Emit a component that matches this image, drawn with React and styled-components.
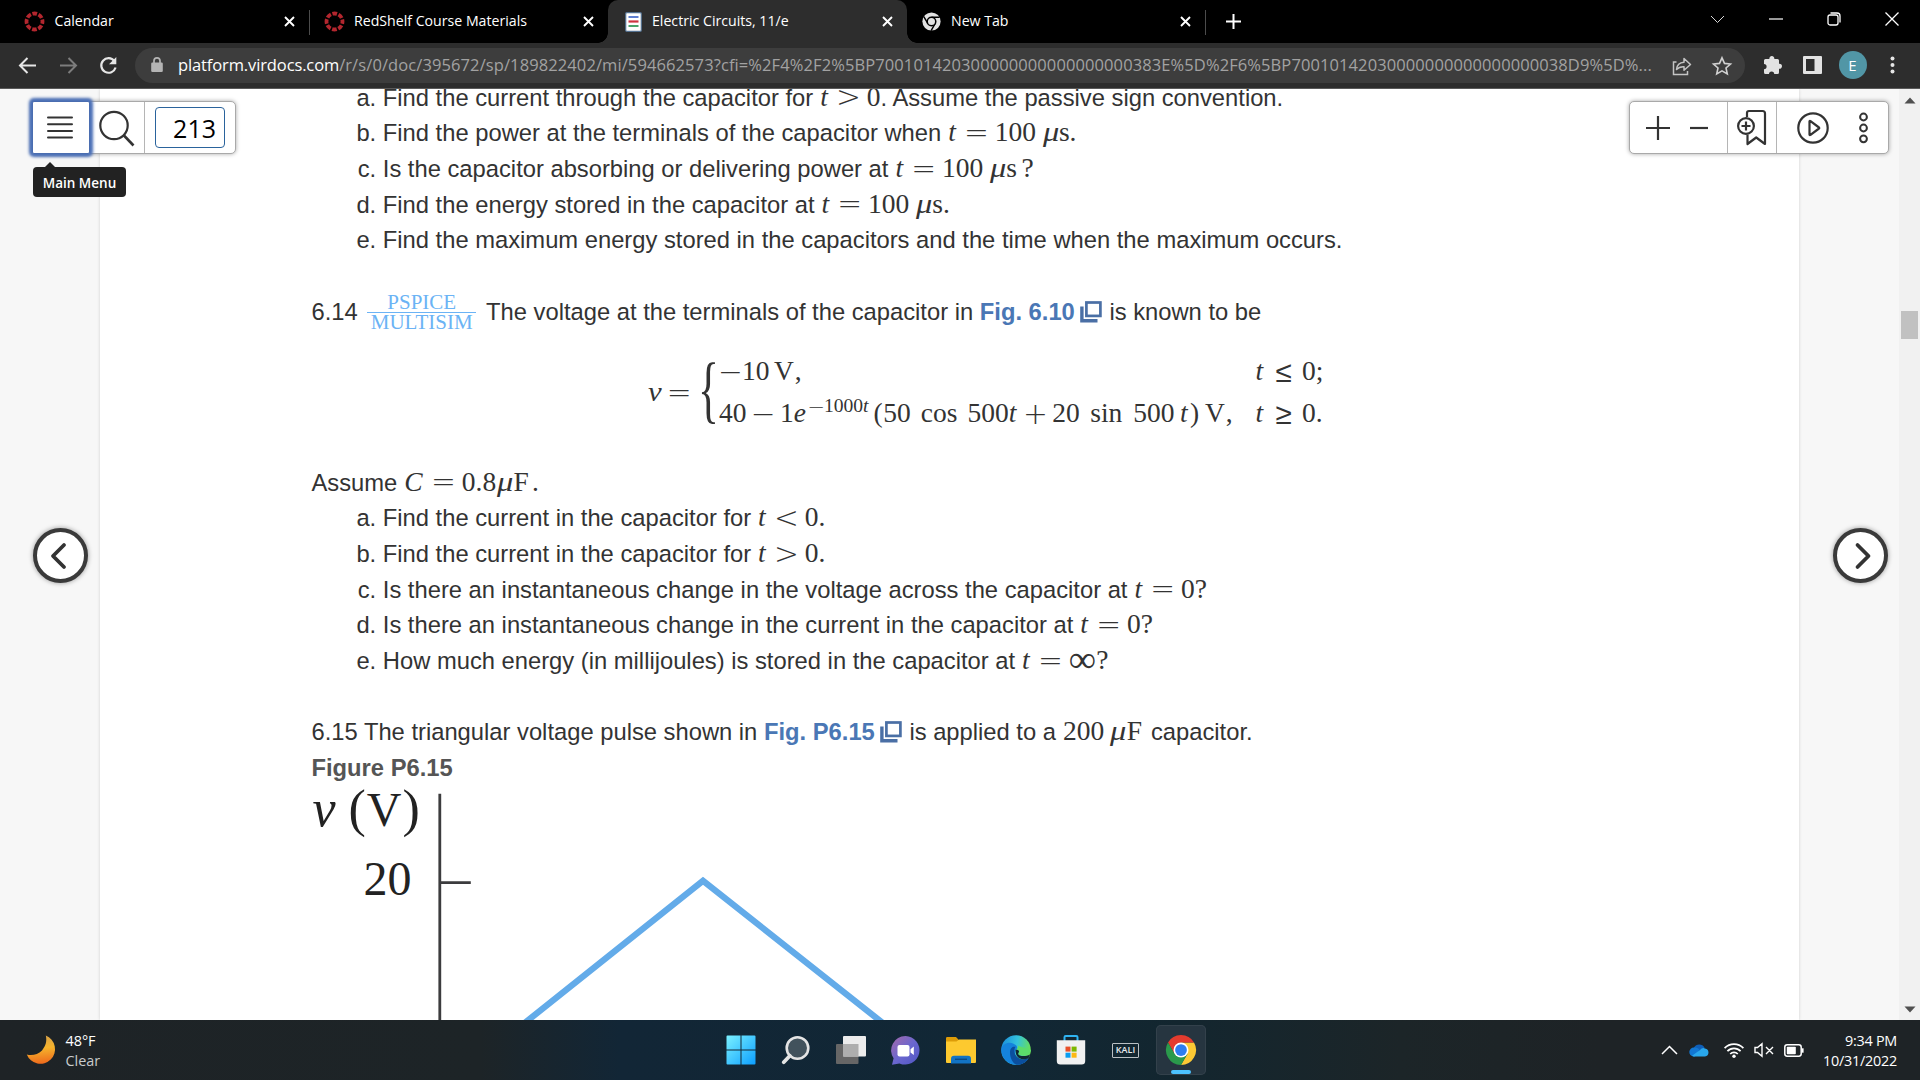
import React from "react";
import styled, { createGlobalStyle } from "styled-components";

const UI = `"Open Sans", "Noto Sans", sans-serif`;
const SERIF = `"Liberation Serif", "Times New Roman", serif`;

const GlobalStyle = createGlobalStyle`
  * { box-sizing: border-box; }
  html, body { margin: 0; padding: 0; width: 1920px; height: 1080px; overflow: hidden; }
  svg { display: block; flex: none; overflow: visible; }
`;

const Screen = styled.div`
  width: 1920px;
  height: 1080px;
  display: flex;
  flex-direction: column;
  overflow: hidden;
  background: #fff;
  font-family: ${UI};
`;

/* ---------- browser chrome ---------- */
const TabStrip = styled.header`
  height: 43px;
  flex: none;
  display: flex;
  background: #000;
`;
const Tab = styled.div`
  width: ${(p) => p.$w}px;
  height: 43px;
  flex: none;
  display: flex;
  align-items: center;
  position: relative;
  padding-left: ${(p) => p.$pl}px;
  padding-right: 14px;
  color: #fff;
  background: ${(p) => (p.$active ? "#2d2d2d" : "transparent")};
  border-radius: 10px 10px 0 0;
  ${(p) =>
    p.$active &&
    `&::before, &::after { content: ""; position: absolute; bottom: 0; width: 10px; height: 10px; }
     &::before { left: -10px; background: radial-gradient(circle at 0 0, #000 9.5px, #2d2d2d 10px); }
     &::after { right: -10px; background: radial-gradient(circle at 100% 0, #000 9.5px, #2d2d2d 10px); }`}
`;
const TabTitle = styled.span`
  flex: 1;
  margin: -2px 0 0 ${(p) => p.$ml || 9.5}px;
  font-size: 14.15px;
  line-height: 20px;
  white-space: nowrap;
`;
const Divider = styled.span`
  width: 1px;
  height: 25px;
  margin-top: 10px;
  flex: none;
  background: #4c4c4c;
`;
const NewTab = styled.span`
  display: flex;
  align-items: center;
  padding-left: 20px;
`;
const WindowControls = styled.div`
  margin-left: auto;
  height: 37px;
  padding-right: 21px;
  display: flex;
  align-items: center;
  gap: 44px;
`;
const NavBar = styled.div`
  height: 46px;
  flex: none;
  display: flex;
  align-items: center;
  background: #2d2d2d;
  border-bottom: 1px solid #5a5a5a;
  padding: 0 0 1px 17px;
`;
const NavButtons = styled.div`
  display: flex;
  gap: 19.5px;
  width: 118px;
`;
const Omnibox = styled.div`
  width: 1610px;
  height: 35px;
  flex: none;
  display: flex;
  align-items: center;
  padding: 0 13px 0 15px;
  border-radius: 18px;
  background: #3d3d3d;
`;
const Url = styled.span`
  width: 1490px;
  flex: none;
  margin-left: 14px;
  color: #a2a2a2;
  font-size: 16.5px;
  line-height: 24px;
  white-space: nowrap;
  letter-spacing: 0.1px;
`;
const Host = styled.span`
  color: #fff;
  letter-spacing: -0.12px;
`;
const UrlActions = styled.div`
  display: flex;
  gap: 20px;
  margin: 2px 0 0 auto;
`;
const Extensions = styled.div`
  display: flex;
  align-items: center;
  padding-left: 17.5px;
  gap: 20px;
`;
const Avatar = styled.span`
  width: 28px;
  height: 28px;
  margin: 0 3px 0 -3px;
  border-radius: 50%;
  display: grid;
  place-items: center;
  background: #5196a6;
  color: #fff;
  font-size: 15px;
`;

/* ---------- reader ---------- */
const Reader = styled.main`
  height: 931px;
  flex: none;
  display: flex;
  position: relative;
  overflow: hidden;
  background: #f7f7f7;
`;
const Page = styled.article`
  width: 1699px;
  margin-left: 100px;
  height: 931px;
  overflow: hidden;
  padding-left: 211.5px;
  background: #fff;
  box-shadow: 0 0 3px rgba(0, 0, 0, 0.16);
  font-family: "Liberation Sans", Arial, sans-serif;
  font-size: 23.75px;
  color: #333;
`;
const Shift = styled.div`
  margin-top: -9.2px;
`;
const Line = styled.p`
  margin: 0;
  height: 35.65px;
  line-height: 35.65px;
  white-space: pre;
  ${(p) => p.$gap && `margin-top: ${p.$gap}px;`}
`;
const List = styled.ol`
  list-style: none;
  margin: 0;
  padding: 0;
`;
const Item = styled.li`
  height: 35.65px;
  line-height: 35.65px;
  white-space: pre;
  display: flex;
`;
const Marker = styled.span`
  width: 71.3px;
  padding-right: 6.6px;
  flex: none;
  text-align: right;
`;
const FigLink = styled.b`
  color: #4a77b5;
`;
const Caption = styled.b`
  color: #555;
`;
const InlineIcon = styled.span`
  display: inline-block;
  vertical-align: -3px;
  margin: 0 0.5px 0 5.5px;
`;

/* ---------- math ---------- */
const Formula = styled.span`
  font-family: ${SERIF};
  font-size: 27.5px;
  line-height: 0;
  display: inline-block;
  white-space: nowrap;
  margin-left: 0.4px;
`;
const Glyph = styled.span`
  display: inline-block;
  width: ${(p) => p.$w}em;
  font-style: ${(p) => (p.$it ? "italic" : "normal")};
  margin-left: ${(p) => p.$l || 0}em;
  ${(p) => p.$sx && `transform: scaleX(${p.$sx}); transform-origin: 0 50%;`}
`;
const InfinityGlyph = styled.span`
  display: inline-block;
  position: relative;
  top: 3px;
  width: 0.72em;
  font-size: 1.39em;
`;
const RelBox = styled.span`
  display: inline-flex;
  justify-content: center;
  width: 0.778em;
  margin: 0 ${(p) => (p.$m === undefined ? 0.278 : p.$m)}em;
`;
const RelSign = styled.span`
  position: relative;
  top: 0.055em;
  font-family: "DejaVu Sans", sans-serif;
  font-weight: 200;
  font-size: 1.08em;
`;
const Rel = ({ children, m }) => (
  <RelBox $m={m}>
    <RelSign>{children}</RelSign>
  </RelBox>
);
const T = () => <Glyph $w={0.361} $it>t</Glyph>;
const Micro = () => <Glyph $w={0.6} $sx={1.18} $it>μ</Glyph>;

const Fraction = styled.span`
  display: inline-flex;
  flex-direction: column;
  align-items: center;
  vertical-align: 10.5px;
  width: 109px;
  margin: 0 9.8px 0 9.5px;
  font-family: ${SERIF};
  font-size: 21px;
  line-height: 19px;
  color: #6bb3f5;
`;
const Numerator = styled.span`
  width: 109px;
  text-align: center;
  border-bottom: 1.5px solid #6bb3f5;
`;
const Equation = styled.div`
  height: 135.7px;
  display: flex;
  padding: 20.3px 0 0 336px;
  font-family: ${SERIF};
  font-size: 27.5px;
`;
const Lhs = styled.span`
  width: 50.5px;
  line-height: 84px;
  white-space: nowrap;
`;
const Brace = styled.span`
  width: 21px;
  display: flex;
  justify-content: center;
  font-size: 75px;
  line-height: 80px;
  transform: scaleX(0.58);
`;
const Cases = styled.div`
  display: grid;
  grid-template-columns: 536.5px auto;
  grid-template-rows: 42px 42px;
  line-height: 42px;
  white-space: nowrap;
`;
const Sup = styled.span`
  font-size: 19.6px;
  line-height: 0;
  position: relative;
  top: -10px;
  margin-left: 2px;
`;

/* ---------- floating controls ---------- */
const FloatBar = styled.div`
  position: absolute;
  top: 12px;
  ${(p) => (p.$left ? `left: 32px; width: 204px;` : `left: 1629px; width: 260px;`)}
  height: 53px;
  display: flex;
  background: #fff;
  border: 1px solid #a9a9a9;
  border-radius: 5px;
  box-shadow: 0 0 4px rgba(0, 0, 0, 0.35);
`;
const BarCell = styled.div`
  width: ${(p) => p.$w}px;
  flex: none;
  display: flex;
  align-items: center;
  justify-content: center;
  gap: ${(p) => p.$gap || 0}px;
  padding-right: ${(p) => p.$pr || 0}px;
  border-right: ${(p) => (p.$rule ? "1px solid #b5b5b5" : "none")};
`;
const MenuButton = styled.button`
  width: 58px;
  height: 53px;
  margin: -1px 0 0 -1px;
  padding: 0 2px 0 0;
  flex: none;
  display: grid;
  place-items: center;
  background: #fff;
  border: 1px solid #4a6db0;
  border-radius: 2px;
  box-shadow: 0 0 3px 3px #4a6fb6;
`;
const PageInput = styled.div`
  width: 70px;
  height: 41px;
  border: 1.5px solid #2a639c;
  border-radius: 4px;
  padding: 1px 8px 0 0;
  text-align: right;
  color: #000;
  font: 25px/39px ${UI};
`;
const Tooltip = styled.div`
  position: absolute;
  left: 33px;
  top: 78px;
  width: 93px;
  height: 30px;
  border-radius: 4px;
  background: #222;
  color: #fff;
  font: 600 13.5px/32px ${UI};
  text-align: center;
  white-space: nowrap;
  &::before {
    content: "";
    position: absolute;
    left: 12px;
    top: -5px;
    border: 5px solid transparent;
    border-top: 0;
    border-bottom-color: #222;
  }
`;
const PageTurn = styled.button`
  position: absolute;
  top: 439px;
  left: ${(p) => p.$x}px;
  width: 55px;
  height: 55px;
  padding: 0;
  border-radius: 50%;
  border: 4px solid #3a3a3a;
  background: #fff;
  display: grid;
  place-items: center;
  box-shadow: 0 0 5px rgba(0, 0, 0, 0.4);
`;
const Scrollbar = styled.div`
  width: 21px;
  margin-left: auto;
  display: flex;
  flex-direction: column;
  align-items: center;
  justify-content: space-between;
  padding: 8px 0 7px;
  background: #f1f1f1;
`;
const Thumb = styled.span`
  width: 17px;
  height: 28px;
  margin-bottom: 460px;
  background: #c1c1c1;
`;

/* ---------- taskbar ---------- */
const Taskbar = styled.footer`
  height: 60px;
  flex: none;
  display: flex;
  align-items: center;
  color: #fff;
  background: linear-gradient(90deg, #1e2326 0, #1d2427 480px, #122636 620px, #112735 1000px, #13262f 1180px, #1c2528 1400px, #1e2326 1600px);
`;
const Weather = styled.div`
  width: 713px;
  padding-left: 26px;
  display: flex;
  align-items: center;
  gap: 9.5px;
`;
const TwoLines = styled.div`
  padding-top: 1px;
  font-size: 14.4px;
  line-height: 20px;
  text-align: ${(p) => p.$align || "left"};
  letter-spacing: ${(p) => p.$track || 0}px;
`;
const Dim = styled.div`
  color: #c9cbcc;
`;
const Apps = styled.div`
  display: flex;
`;
const AppSlot = styled.div`
  width: 50px;
  height: 50px;
  margin: 0 2.5px;
  border-radius: 5px;
  position: relative;
  display: grid;
  place-items: center;
  ${(p) => p.$active && `background: #263540; box-shadow: inset 0 0 0 1px #33414b;
    &::after { content: ""; position: absolute; bottom: 1px; left: 15px; width: 20px; height: 4px; border-radius: 2px; background: #4cc2ff; }`}
`;
const Kali = styled.span`
  width: 27px;
  height: 15px;
  border: 1.5px solid #b9c0c4;
  border-radius: 1px;
  color: #e8ebec;
  font: 600 9px/12px ${UI};
  text-align: center;
`;
const Tray = styled.div`
  margin-left: auto;
  padding-right: 23px;
  display: flex;
  align-items: center;
`;
const TrayIcon = styled.span`
  margin-right: ${(p) => p.$r}px;
`;

/* ---------- icons ---------- */
const Stroke = ({ w, h = w, d, c = "#fff", s = 1.6, children, cap = "butt", join = "miter" }) => (
  <svg width={w} height={h} viewBox={`0 0 ${w} ${h}`} fill="none" stroke={c} strokeWidth={s} strokeLinecap={cap} strokeLinejoin={join}>
    {d && <path d={d} />}
    {children}
  </svg>
);
const Close = () => <Stroke w={11} s={1.9} d="M1 1 10 10M10 1 1 10" />;
const CanvasLogo = () => (
  <Stroke w={21} c="#b3262e" s={3.8}>
    <circle cx="10.5" cy="10.5" r="8" strokeDasharray="4.7 1.58" strokeDashoffset="2.35" />
  </Stroke>
);
const DocIcon = () => (
  <svg width="17" height="20" viewBox="0 0 17 20">
    <rect x=".7" y=".7" width="15.6" height="18.6" rx="1" fill="#fff" stroke="#53708f" strokeWidth="1.2" />
    <path d="M3.5 5h10" stroke="#5f7fd0" strokeWidth="2" />
    <path d="M3.5 9.5h10" stroke="#cf3341" strokeWidth="2.2" />
    <path d="M3.5 14h10" stroke="#4ba36b" strokeWidth="2" />
  </svg>
);
const ChromeMono = () => (
  <svg width="19" height="19" viewBox="0 0 20 20">
    <circle cx="10" cy="10" r="9.6" fill="#e3e3e3" />
    <path d="M10 5.6h8.6M6.2 12.2 1.9 4.8M13.8 12.2 9.6 19.6" stroke="#000" strokeWidth="1.5" />
    <circle cx="10" cy="10" r="4.5" fill="#e3e3e3" stroke="#000" strokeWidth="1.6" />
    <circle cx="10" cy="10" r="2.2" fill="#e3e3e3" />
  </svg>
);
const ChromeColor = () => (
  <svg width="30" height="30" viewBox="0 0 48 48">
    <path d="M24 12h20.800A24 24 0 0 1 24 48l10.400-18Z" fill="#fcc934" />
    <path d="M3.200 12A24 24 0 0 1 44.800 12H24L13.600 30Z" fill="#e33b2e" />
    <path d="M3.200 12 13.600 30 24 36 34.400 30 24 48A24 24 0 0 1 3.200 12Z" fill="#2a9a4b" />
    <circle cx="24" cy="24" r="12" fill="#fff" />
    <circle cx="24" cy="24" r="9.400" fill="#2d7df0" />
  </svg>
);
const PopOut = () => (
  <svg width="22" height="22" viewBox="0 0 22 22" fill="none" stroke="#4a6fa5">
    <rect x="6.400" y="1.500" width="14" height="13.400" strokeWidth="2.700" />
    <path d="M1.900 5.500v14.200h15.600" strokeWidth="3.400" />
  </svg>
);
const Moon = () => (
  <svg width="30" height="30" viewBox="0 0 30 30">
    <defs>
      <linearGradient id="moon" x1="0.4" y1="0" x2="0.5" y2="1">
        <stop offset="0" stopColor="#d8a24a" />
        <stop offset=".45" stopColor="#f5b32c" />
        <stop offset="1" stopColor="#ee6a1c" />
      </linearGradient>
    </defs>
    <path d="M19.8 0.6A14.6 14.6 0 1 1 0.8 19.4C6 20.8 12 19.4 16 15.4 20 11 21 5.6 19.8 0.6Z" fill="url(#moon)" />
  </svg>
);
const WindowsLogo = () => (
  <svg width="30" height="30" viewBox="0 0 30 30">
    <defs>
      <linearGradient id="win" x1="0" y1="0" x2="30" y2="30" gradientUnits="userSpaceOnUse">
        <stop offset="0" stopColor="#7df3ff" />
        <stop offset="1" stopColor="#0a9dff" />
      </linearGradient>
    </defs>
    <path d="M1.4.5h13.1v14H.5v-13a1 1 0 0 1 .9-1ZM15.5.5h13a1 1 0 0 1 1 1v13h-14ZM.5 15.5h14v14h-13a1 1 0 0 1-1-1ZM15.5 15.5h14v13a1 1 0 0 1-1 1h-13Z" fill="url(#win)" />
  </svg>
);
const TaskSearch = () => (
  <svg width="28" height="30" viewBox="0 0 28 30" fill="none" stroke="#e4e4e4">
    <circle cx="15.500" cy="13" r="10.800" strokeWidth="2.600" fill="#42525c" />
    <path d="M7.900 20.800 1.700 27.200" strokeWidth="3.800" strokeLinecap="round" />
  </svg>
);
const TaskView = () => (
  <svg width="30" height="28" viewBox="0 0 30 28">
    <rect x="0" y="8" width="22.5" height="20" rx="1" fill="#666" />
    <rect x="7" y="0" width="23" height="20.5" rx="1" fill="#ececec" />
    <rect x="7" y="8" width="15.5" height="12.5" fill="#aeaeae" />
  </svg>
);
const Chat = () => (
  <svg width="29" height="29" viewBox="0 0 29 29">
    <defs>
      <linearGradient id="chat" x1="0" y1="0" x2="1" y2="1">
        <stop offset="0" stopColor="#a568a8" />
        <stop offset=".5" stopColor="#6b67cf" />
        <stop offset="1" stopColor="#4f55c4" />
      </linearGradient>
    </defs>
    <path d="M14.5 0a14.3 14.3 0 1 1-6 27.4L1 28.8l1.6-6.600A14.3 14.3 0 0 1 14.5 0Z" fill="url(#chat)" />
    <rect x="6.5" y="9" width="12" height="11.5" rx="2" fill="#fff" />
    <path d="M19.5 13.2 22.8 10.6v8.4l-3.3-2.600Z" fill="#fff" />
  </svg>
);
const Folder = () => (
  <svg width="30" height="28" viewBox="0 0 30 28">
    <path d="M0 2.2Q0 1 1.2 1H10l3.4 3.4H28.600Q30 4.4 30 6v6H0Z" fill="#dd9c08" />
    <path d="M0 5.5h10.5l2.6-2H30V26q0 1-1 1H1q-1 0-1-1Z" fill="#fdc92f" />
    <path d="M5 27.4v-4.600q0-3 3-3h14q3 0 3 3v4.600Z" fill="#1273c4" />
    <path d="M9 23.3h12" stroke="#0a4a86" strokeWidth="1.4" />
  </svg>
);
const Edge = () => (
  <svg width="30" height="30" viewBox="0 0 30 30">
    <defs>
      <linearGradient id="edgeTop" x1="0" y1=".3" x2="1" y2=".5">
        <stop offset="0" stopColor="#1b8fdc" />
        <stop offset=".5" stopColor="#33c2dd" />
        <stop offset="1" stopColor="#6be04f" />
      </linearGradient>
    </defs>
    <circle cx="15" cy="15" r="14.8" fill="url(#edgeTop)" />
    <path d="M.3 14.5C1 8.600 7.500 6.500 12 8.400 16 10 17 12 15.500 14.500 12 18 14 24.500 21 25.500 24 26 26.500 24.500 27.600 23.300 24 28.500 19.500 30 15 29.800 7 29.500.3 23 .3 14.500Z" fill="#1583dc" />
    <path d="M9 17.500C9 13 11.500 11.300 14.500 11.800 11.500 16.500 14.500 23.500 21.500 24.300 25 24.600 27.500 22.500 28 22.200 25.500 27.500 20.500 30 15.500 29.800 11.500 28 9 23 9 17.500Z" fill="#0b4f9e" />
    <path d="M15.500 14.500C17 12.500 17.500 11.500 16.500 10.500L30 15C29.500 19 26 20.500 22.500 20.500 19 20.500 16.500 19.500 17.300 18.200 18.500 17 18 15 15.500 14.500Z" fill="#5bdc6a" />
    <path d="M14.600 14.800C17.500 14 19 16.500 17.300 18.200 16.500 19.700 19.500 21.300 24 21 26.500 20.800 28.500 20 29 19.200 28.800 21 28 22.300 27.300 23.200 22.500 26 14 24 14.600 14.800Z" fill="#112735" />
  </svg>
);
const Store = () => (
  <svg width="30" height="30" viewBox="0 0 30 30">
    <path d="M8.500 6V2.200Q8.500 1 9.700 1h10.600q1.200 0 1.200 1.200V6" fill="none" stroke="#2fb4f2" strokeWidth="2" />
    <path d="M.8 5.200h28.400V26q0 3.600-3.600 3.600H4.400Q.8 29.600.8 26Z" fill="#f1f1f1" />
    <rect x="9.500" y="11.600" width="5" height="5" fill="#e8502a" />
    <rect x="15.600" y="11.600" width="5" height="5" fill="#7db700" />
    <rect x="9.500" y="17.700" width="5" height="5" fill="#0a9df0" />
    <rect x="15.600" y="17.700" width="5" height="5" fill="#fcb813" />
  </svg>
);

const Micros = ({ n }) => (
  <>
    {n}
    <Glyph $w={0.235} />
    <Micro />
    <Glyph $w={0.385}>s</Glyph>
  </>
);

const ZEROS = "0".repeat(17);
const URL_PATH = `/r/s/0/doc/395672/sp/189822402/mi/594662573?cfi=%2F4%2F2%5BP7001014203${ZEROS}383E%5D%2F6%5BP7001014203${ZEROS}38D9%5D%...`;

export default function App() {
  return (
    <Screen>
      <GlobalStyle />
      <TabStrip>
        <Tab $w={309} $pl={24}>
          <CanvasLogo />
          <TabTitle>Calendar</TabTitle>
          <Close />
        </Tab>
        <Divider />
        <Tab $w={298} $pl={13.5}>
          <CanvasLogo />
          <TabTitle>RedShelf Course Materials</TabTitle>
          <Close />
        </Tab>
        <Tab $w={299} $pl={17} $active>
          <DocIcon />
          <TabTitle $ml={10}>Electric Circuits, 11/e</TabTitle>
          <Close />
        </Tab>
        <Tab $w={298} $pl={14.5}>
          <ChromeMono />
          <TabTitle $ml={10.5}>New Tab</TabTitle>
          <Close />
        </Tab>
        <Divider />
        <NewTab>
          <Stroke w={15} s={2} d="M7.500 0v15M0 7.500h15" />
        </NewTab>
        <WindowControls>
          <Stroke w={14} s={1} c="#d8d8d8" d="M0 4l6.500 6.500L13 4" />
          <Stroke w={14} s={1.200} d="M0 7h14" />
          <Stroke w={14} s={1.300}>
            <rect x="1" y="3" width="10" height="10" rx="2" />
            <path d="M3.500 1H10q3 0 3 3v6.500" />
          </Stroke>
          <Stroke w={14} s={1.300} d="M.5.5l13 13M13.500.5l-13 13" />
        </WindowControls>
      </TabStrip>
      <NavBar>
        <NavButtons>
          <Stroke w={21} s={2} c="#e6e6e6" d="M19 10.500H3M10.500 3 3 10.500l7.500 7.500" />
          <Stroke w={21} s={2} c="#7d7d7d" d="M2 10.500h16M10.500 3l7.500 7.500-7.500 7.500" />
          <Stroke w={21} s={2.200} c="#e6e6e6">
            <path d="M16.400 6A7.300 7.300 0 1 0 17.600 12.500" />
            <path d="M18.300 2v7.300h-7.300Z" fill="#e6e6e6" stroke="none" />
          </Stroke>
        </NavButtons>
        <Omnibox>
          <svg width="14" height="16" viewBox="0 0 14 16">
            <rect x="1.200" y="5.600" width="11.600" height="9.400" rx="1.200" fill="#b4b4b4" />
            <path d="M4 6V3.800a3 3 0 0 1 6 0V6" fill="none" stroke="#b4b4b4" strokeWidth="1.700" />
          </svg>
          <Url>
            <Host>platform.virdocs.com</Host>
            {URL_PATH}
          </Url>
          <UrlActions>
            <Stroke w={20} s={1.500} c="#c4c4c4">
              <path d="M4.500 6H1.500v12.500h14V15" />
              <path d="M4.500 13.500C5 8.500 8 6.500 12 6.300V2.500l6.500 6-6.500 5.800v-3.600C9 10.500 6.500 11.300 4.500 13.500Z" strokeLinejoin="round" />
            </Stroke>
            <Stroke w={20} s={1.600} c="#d0d0d0" d="M10 1.800l2.500 5.600 6 .6-4.500 4 1.300 6L10 14.900 4.700 18 6 12 1.500 8l6-.6Z" />
          </UrlActions>
        </Omnibox>
        <Extensions>
          <svg width="20" height="20" viewBox="0 0 20 20" fill="#e2e2e2">
            <path d="M1 5.500q0-1.500 1.500-1.500H6.400a2.500 2.500 0 1 1 4.900 0h3.200q1.500 0 1.500 1.500v3.300a2.500 2.500 0 1 1 0 4.900v3.800q0 1.500-1.500 1.500h-3.300a2.600 2.600 0 0 0-5.200 0H2.500Q1 19 1 17.500v-3.300a2.600 2.600 0 0 0 0-5.200Z" />
          </svg>
          <svg width="19" height="18" viewBox="0 0 19 18">
            <rect width="19" height="18" rx="1" fill="#e2e2e2" />
            <rect x="3" y="3" width="8.500" height="12" fill="#2d2d2d" />
          </svg>
          <Avatar>E</Avatar>
          <svg width="5" height="18" viewBox="0 0 5 18" fill="#e6e6e6">
            <circle cx="2.500" cy="2.500" r="2" /><circle cx="2.500" cy="9" r="2" /><circle cx="2.500" cy="15.500" r="2" />
          </svg>
        </Extensions>
      </NavBar>

      <Reader>
        <Page>
          <Shift>
            <List>
              <Item>
                <Marker>a.</Marker>
                <span>Find the current through the capacitor for <Formula><T /><Rel>&gt;</Rel>0</Formula>. Assume the passive sign convention.</span>
              </Item>
              <Item>
                <Marker>b.</Marker>
                <span>Find the power at the terminals of the capacitor when <Formula><T /><Rel>=</Rel><Micros n="100" />.</Formula></span>
              </Item>
              <Item>
                <Marker>c.</Marker>
                <span>Is the capacitor absorbing or delivering power at <Formula><T /><Rel>=</Rel><Micros n="100" /><Glyph $w={0.472} $l={0.167}>?</Glyph></Formula></span>
              </Item>
              <Item>
                <Marker>d.</Marker>
                <span>Find the energy stored in the capacitor at <Formula><T /><Rel>=</Rel><Micros n="100" />.</Formula></span>
              </Item>
              <Item>
                <Marker>e.</Marker>
                <span>Find the maximum energy stored in the capacitors and the time when the maximum occurs.</span>
              </Item>
            </List>
            <Line $gap={35.4}>
              <span>6.14</span>
              <Fraction>
                <Numerator>PSPICE</Numerator>
                <span>MULTISIM</span>
              </Fraction>
              <span>The voltage at the terminals of the capacitor in </span>
              <FigLink>Fig. 6.10</FigLink>
              <InlineIcon><PopOut /></InlineIcon>
              <span> is known to be</span>
            </Line>
            <Equation>
              <Lhs>
                <Glyph $w={0.485} $sx={1.12} $it>v</Glyph>
                <Rel>=</Rel>
              </Lhs>
              <Brace>{"{"}</Brace>
              <Cases>
                <span><Rel m={0.03}>−</Rel>10<Glyph $w={0.75} $l={0.167}>V</Glyph>,</span>
                <span><T /><Rel>≤</Rel>0;</span>
                <span>
                  40<Rel m={0.222}>−</Rel>1<Glyph $w={0.466} $it>e</Glyph>
                  <Sup><Rel m={0}>−</Rel>1000<T /></Sup>
                  <Glyph $w={0.36} $l={0.12}>(</Glyph>50<Glyph $w={1.333} $l={0.36}>cos</Glyph><Glyph $w={0.37} />500<T />
                  <Rel m={0.222}>+</Rel>20<Glyph $w={1.167} $l={0.38}>sin</Glyph><Glyph $w={0.4} />500
                  <Glyph $w={0.361} $l={0.2} $it>t</Glyph>
                  <Glyph $w={0.389}>)</Glyph><Glyph $w={0.75} $l={0.16}>V</Glyph>,
                </span>
                <span><T /><Rel>≥</Rel>0.</span>
              </Cases>
            </Equation>
            <Line>
              Assume <Formula><Glyph $w={0.76} $it>C</Glyph><Rel>=</Rel>0.8<Glyph $w={0.03} /><Micro /><Glyph $w={0.67}>F</Glyph>.</Formula>
            </Line>
            <List>
              <Item>
                <Marker>a.</Marker>
                <span>Find the current in the capacitor for <Formula><T /><Rel>&lt;</Rel>0.</Formula></span>
              </Item>
              <Item>
                <Marker>b.</Marker>
                <span>Find the current in the capacitor for <Formula><T /><Rel>&gt;</Rel>0.</Formula></span>
              </Item>
              <Item>
                <Marker>c.</Marker>
                <span>Is there an instantaneous change in the voltage across the capacitor at <Formula><T /><Rel>=</Rel>0?</Formula></span>
              </Item>
              <Item>
                <Marker>d.</Marker>
                <span>Is there an instantaneous change in the current in the capacitor at <Formula><T /><Rel>=</Rel>0?</Formula></span>
              </Item>
              <Item>
                <Marker>e.</Marker>
                <span>How much energy (in millijoules) is stored in the capacitor at <Formula><T /><Rel>=</Rel><InfinityGlyph>∞</InfinityGlyph>?</Formula></span>
              </Item>
            </List>
            <Line $gap={35.65}>
              <span>6.15 The triangular voltage pulse shown in </span><FigLink>Fig. P6.15</FigLink>
              <InlineIcon><PopOut /></InlineIcon>
              <span> is applied to a </span><Formula>200<Glyph $w={0.22} /><Micro /><Glyph $w={0.64}>F</Glyph></Formula><span> capacitor.</span>
            </Line>
            <Line><Caption>Figure P6.15</Caption></Line>
            <svg width="700" height="236" viewBox="311.500 785.300 700 236">
              <g fill="#222" fontFamily="Liberation Serif, serif" fontSize="48">
                <text x="312" y="825" fontStyle="italic" fontSize="52">v</text>
                <text x="348" y="825" letterSpacing="1"><tspan fontSize="52">(</tspan>V<tspan fontSize="52">)</tspan></text>
                <text x="363" y="894">20</text>
              </g>
              <path d="M439.300 793v240M439.300 882h31" stroke="#3c3c3e" strokeWidth="2.800" />
              <path d="M514.500 1030 702.500 880 892 1030" fill="none" stroke="#63abe9" strokeWidth="6.300" />
            </svg>
          </Shift>
        </Page>
        <Scrollbar>
          <svg width="12" height="7" viewBox="0 0 12 7"><path d="M6 .5 11.500 6.500H.5Z" fill="#505050" /></svg>
          <Thumb />
          <svg width="12" height="7" viewBox="0 0 12 7"><path d="M.5.5h11L6 6.500Z" fill="#505050" /></svg>
        </Scrollbar>

        <FloatBar $left>
          <MenuButton>
            <Stroke w={26} h={23} s={2} c="#333" cap="round" d="M1 1.500h24M1 8.200h24M1 14.900h24M1 21.500h24" />
          </MenuButton>
          <BarCell $w={55} $rule $pr={2.5}>
            <Stroke w={36} h={36} s={2.200} c="#333">
              <circle cx="16" cy="15.500" r="13.700" />
              <path d="M25.500 25 35.500 35.500" strokeWidth="2.600" />
            </Stroke>
          </BarCell>
          <BarCell $w={90}>
            <PageInput>213</PageInput>
          </BarCell>
        </FloatBar>
        <Tooltip>Main Menu</Tooltip>

        <FloatBar>
          <BarCell $w={98} $rule $gap={20} $pr={4}>
            <Stroke w={24} s={2.200} c="#333" d="M12 0v24M0 12h24" />
            <Stroke w={18} h={4} s={2.200} c="#333" d="M0 2h18" />
          </BarCell>
          <BarCell $w={49} $rule $pr={1}>
            <Stroke w={29} h={36} s={2.200} c="#333" join="round">
              <path d="M10 7V3q0-2 2-2h13.500q2.500 0 2.500 2.500V34l-8.800-6.500L10.500 34V24.500" />
              <circle cx="9" cy="16" r="7.900" fill="#fff" />
              <path d="M9 11.500v9M4.500 16h9" />
            </Stroke>
          </BarCell>
          <BarCell $w={111} $gap={30} $pr={1}>
            <Stroke w={32} s={2.200} c="#333" join="round">
              <circle cx="16" cy="16" r="14.700" />
              <path d="M12.500 9.500v13q0 1 1 .4l8.500-6.400q.6-.5 0-1L13.500 9.100q-1-.6-1 .4Z" />
            </Stroke>
            <Stroke w={9} h={32} s={2} c="#333">
              <circle cx="4.500" cy="5" r="3.400" /><circle cx="4.500" cy="16" r="3.400" /><circle cx="4.500" cy="26.800" r="3.400" />
            </Stroke>
          </BarCell>
        </FloatBar>

        <PageTurn $x={33}>
          <Stroke w={28} s={3.800} c="#333" cap="round" join="round" d="M17 3 6 14l11 11" />
        </PageTurn>
        <PageTurn $x={1833}>
          <Stroke w={28} s={3.800} c="#333" cap="round" join="round" d="M10.500 3l11 11-11 11" />
        </PageTurn>
      </Reader>

      <Taskbar>
        <Weather>
          <Moon />
          <TwoLines>
            <div>48°F</div>
            <Dim>Clear</Dim>
          </TwoLines>
        </Weather>
        <Apps>
          <AppSlot><WindowsLogo /></AppSlot>
          <AppSlot><TaskSearch /></AppSlot>
          <AppSlot><TaskView /></AppSlot>
          <AppSlot><Chat /></AppSlot>
          <AppSlot><Folder /></AppSlot>
          <AppSlot><Edge /></AppSlot>
          <AppSlot><Store /></AppSlot>
          <AppSlot><Kali>KALI</Kali></AppSlot>
          <AppSlot $active><ChromeColor /></AppSlot>
        </Apps>
        <Tray>
          <TrayIcon $r={11}><Stroke w={17} h={10} s={1.500} d="M1 9l7.500-7.500L16 9" /></TrayIcon>
          <TrayIcon $r={15}>
            <svg width="20" height="14" viewBox="0 0 20 14">
              <path d="M5 4.500A6 6 0 0 1 15.500 4.500L14 10H4Z" fill="#0f5fb8" />
              <path d="M4.500 13.500A4.400 4.400 0 0 1 5 4.600Q8 4 10.500 6.500L6 13.500Z" fill="#1277d3" />
              <path d="M3 12.800 11 7q2-2.600 5-1.600A4.100 4.100 0 0 1 16 13.500H4.500Z" fill="#29a7ec" />
            </svg>
          </TrayIcon>
          <TrayIcon $r={10}>
            <Stroke w={20} h={16} s={1.700}>
              <path d="M.6 6.200a13 13 0 0 1 18.800 0M3.400 9.200a9 9 0 0 1 13.200 0M6.200 12a5.300 5.300 0 0 1 7.600 0" />
              <circle cx="10" cy="14.200" r="1.700" fill="#fff" stroke="none" />
            </Stroke>
          </TrayIcon>
          <TrayIcon $r={10}>
            <Stroke w={20} h={16} s={1.400} d="M1 5.500h2.500L8 1.700v12.600L3.500 10.500H1ZM12 5l7 7M19 5l-7 7" />
          </TrayIcon>
          <TrayIcon $r={19}>
            <svg width="20" height="13" viewBox="0 0 20 13">
              <rect x=".8" y=".8" width="16.400" height="11.400" rx="2.400" fill="none" stroke="#fff" strokeWidth="1.500" />
              <rect x="2.800" y="2.800" width="9" height="7.400" rx=".8" fill="#fff" />
              <path d="M18.600 4.300v4.400" stroke="#fff" strokeWidth="2" />
            </svg>
          </TrayIcon>
          <TwoLines $align="right" $track={-0.25}>
            <div>9:34 PM</div>
            <div>10/31/2022</div>
          </TwoLines>
        </Tray>
      </Taskbar>
    </Screen>
  );
}
